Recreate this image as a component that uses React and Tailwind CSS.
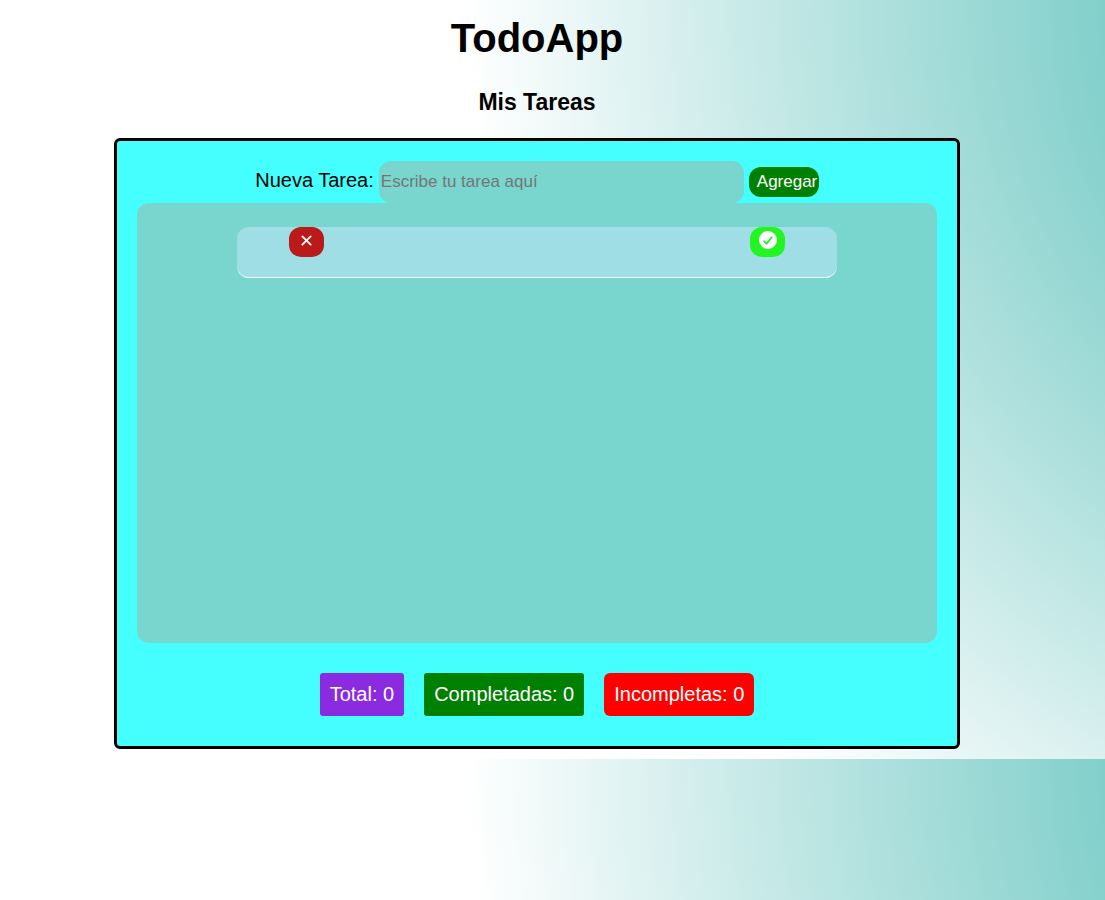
import { useState } from "react";
import { IoClose } from "react-icons/io5";

function CheckCircle() {
  return (
    <svg width="18" height="18" viewBox="0 0 18 18" aria-hidden="true">
      <circle cx="9" cy="9" r="9" fill="#ffffff" />
      <path
        d="M5.1 10.1 7.6 12.6 12.7 6.2"
        fill="none"
        stroke="#22f522"
        strokeWidth="1.8"
        strokeLinecap="round"
        strokeLinejoin="round"
      />
    </svg>
  );
}

export default function App() {
  const [task, setTask] = useState("");

  return (
    <div className="min-h-screen bg-white bg-[radial-gradient(circle_1058px_at_138%_0,#30b0a8,#ffffff)] bg-size-[100%_759px] bg-repeat-y pr-[31px] font-['Liberation_Sans',Arial,sans-serif] text-xl text-black">
      <header className="pt-4 text-center">
        <h1 className="text-[40px] leading-[44px] font-bold">TodoApp</h1>
        <h2 className="mt-7 text-[23px] leading-7 font-bold">Mis Tareas</h2>
      </header>

      <main className="mx-auto mt-[22px] max-w-[846px] rounded-md border-3 border-black bg-[#45ffff] px-5 pt-5 pb-[30px]">
        <form
          className="flex items-center justify-center gap-[5px]"
          onSubmit={(e) => e.preventDefault()}
        >
          <label htmlFor="task" className="pb-1 leading-6">
            Nueva Tarea:
          </label>
          <input
            id="task"
            type="text"
            value={task}
            onChange={(e) => setTask(e.target.value)}
            placeholder="Escribe tu tarea aquí"
            className="h-[42px] w-[365px] min-w-0 rounded-xl bg-[#78d6ce] px-0.5 text-[17px] outline-none placeholder:text-[#757575]"
          />
          <button
            type="submit"
            className="h-[30px] w-[70px] rounded-xl bg-[#008000] pl-2 text-left text-[17px] leading-[30px] text-white"
          >
            Agregar
          </button>
        </form>

        <ul className="min-h-[440px] rounded-xl bg-[#78d6ce] pt-6">
          <li className="mx-auto flex h-[51px] max-w-[600px] items-start justify-between rounded-xl border-b border-white bg-[#9edee4] px-[52px]">
            <button
              type="button"
              aria-label="Eliminar"
              className="flex h-[30px] w-[35px] items-start justify-center rounded-xl bg-[#bb1a1b] pt-1 text-white"
            >
              <IoClose size={19} />
            </button>
            <button
              type="button"
              aria-label="Completar"
              className="flex h-[30px] w-[35px] items-start justify-center rounded-xl bg-[#22f522] pt-1 text-white"
            >
              <CheckCircle />
            </button>
          </li>
        </ul>

        <div className="mt-[30px] flex flex-wrap justify-center gap-5 leading-[23px] text-white">
          <p className="rounded-[3px] bg-[#8a2be2] p-2.5">Total: 0</p>
          <p className="rounded-[3px] bg-[#008000] p-2.5">Completadas: 0</p>
          <p className="rounded-md bg-[#ff0000] p-2.5">Incompletas: 0</p>
        </div>
      </main>
    </div>
  );
}
